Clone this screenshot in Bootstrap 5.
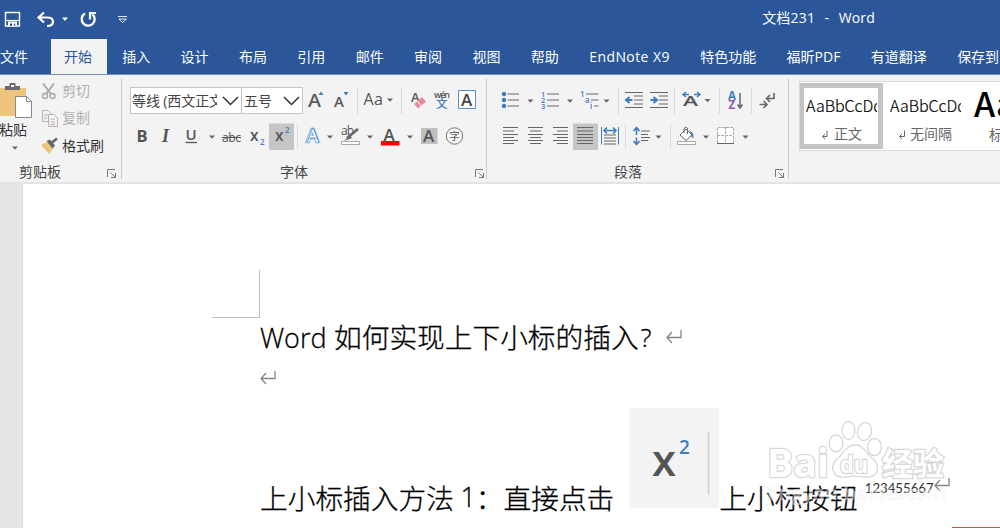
<!DOCTYPE html>
<html lang="zh-CN">
<head>
<meta charset="utf-8">
<meta name="viewport" content="width=device-width, initial-scale=1">
<title>文档231 - Word</title>
<link href="https://cdn.jsdelivr.net/npm/bootstrap@5.3.0/dist/css/bootstrap.min.css" rel="stylesheet">
<style>
body{width:1000px;height:528px;overflow:hidden;background:#fff;font-family:"Open Sans","Noto Sans CJK SC",sans-serif;font-size:14px;line-height:20px;color:#333}
svg{display:block;flex:none;overflow:visible}
svg text{font-family:"Open Sans","Noto Sans CJK SC",sans-serif}
.titlebar{height:39px;background:#2b579a;color:#fff;padding-right:125px}
.titlebar .doc-title{white-space:pre;word-spacing:.9px;letter-spacing:.18px;margin-top:-3px}
.tabs{height:36px;background:#2b579a;border-bottom:1px solid #7390bd;flex-wrap:nowrap;margin-left:-14px;width:1014px;overflow:hidden}
.tabs .nav-link{color:#fff;padding:7px 15.2px 0;height:35px;white-space:nowrap;border:0;line-height:21px;flex:none}
.tabs .nav-link.first{padding-left:14px;width:65px}
.tabs .nav-link.active{background:#f3f3f3;color:#2b579a;padding:7px 0 0 13px;height:36px;width:56px}
.tabs .nav-link.latin-tab{letter-spacing:.42px;width:111px;padding-right:0}
.ribbon{height:109px;background:#f3f3f3;border-bottom:2px solid #e3e3e3}
.group{border-right:1px solid #c8c8c8;height:100px;margin-top:4px}
.g-clip{width:122px}.g-font{width:365px}.g-para{width:302px}
.tool-row{height:28px}
.row-two{margin-top:8px}
.g-font .tools,.g-para .tools{padding-top:8px}
.fbox{height:27px;border:1px solid #c6c6c6;background:#fff;color:#444;line-height:25px;white-space:nowrap}
.fbox .val{overflow:hidden;white-space:nowrap;padding-left:2px}
.fbox .val.wide{letter-spacing:-.1px;padding-left:1px}
.gallery{width:201px;height:70px;margin:6px 0 0 10px;background:#fff;border:1px solid #d8d8d8;border-right:0;overflow:hidden}
.style-card{width:84px;height:66px;margin-top:1px;margin-left:-1px;flex:none;padding:9px 0 0 8px}
.style-card.on{border:5px solid #c4c4c4;padding:4px 0 0 2px}
.style-card .sample{width:71px;overflow:hidden;white-space:nowrap;font:300 16px/27px "Noto Sans CJK SC",sans-serif;color:#000;-webkit-text-stroke:.2px #000}
.style-card .name{color:#666;line-height:30px;white-space:nowrap}
.workspace{height:344px;background:#fff}
.ruler{width:23px;background:#e6e6e6;border-right:1px solid #dcdcdc;flex:none}
.page-area{padding-left:189px;width:977px}
.crop{width:48px;height:48px;margin-top:86px;border:solid #bdbdbd;border-width:0 1px 1px 0}
.para{margin-left:48px;white-space:pre;color:#000;font:300 27.7px/36px "Noto Sans CJK SC",sans-serif;height:40px;-webkit-text-stroke:.3px #000}
.para svg{-webkit-text-stroke:0}
.last-line{height:117px}
.latin{font-family:"Open Sans",sans-serif;font-size:27px;display:inline-block}
.lead-word{padding-top:2px}
.qmark{font-family:"Open Sans",sans-serif;font-size:26px;width:20px;padding:1px 0 0 2px}
.pic{margin:0 0 7px 15px}
.sup-text{font:400 13.2px/20px Lato,sans-serif;margin:0 0 17px 7px;color:#333;-webkit-text-stroke:0}
.watermark{left:760px;top:412px}
.red-edge{left:952px;top:527px;width:48px;height:1px;background:#c0504d}
.g{stroke:#666;fill:none}.b{stroke:#3f7cbf;fill:none}
</style>
</head>
<body class="position-relative">
<svg width="0" height="0" class="position-absolute">
  <defs>
    <path id="caret" d="M-3-1.5H3L0 1.8Z" fill="#666"/>
    <g id="launch" fill="none" stroke="#777"><path d="M.5 8V.5H8M3.5 3.5 8 8M8.500 4V8.500H4"/></g>
    <path id="ret" d="M15 0V7.500H1M6 2 1 7.500 6 13" fill="none" stroke="#858585" stroke-width="1.300"/>
  </defs>
</svg>

<header class="titlebar d-flex justify-content-between align-items-center">
  <svg width="140" height="39" viewBox="0 0 140 39" fill="none" stroke="#fff">
    <path d="M5.500 12.500H19.500V26H5.500Z" stroke-width="1.400"/><path d="M5 20.500H19" stroke-width="1.200"/><path d="M8 21.500H17V26.500H8Z" fill="#fff" stroke="none"/><path d="M10 23.500H12V26H10ZM14 23.500H15.200V26H14Z" fill="#2b579a" stroke="none"/>
    <path d="M39 17.500H47C51 17.500 53 19.500 53 21.800C53 24.500 50.500 26 47 26M44 12.500 38.500 17.500 44 22.500" stroke-width="2.200"/>
    <path d="M62 17.500H68L65 21Z" fill="#fff" stroke="none"/>
    <path d="M85 13.500A6.500 6.500 0 1 0 92.500 14.300" stroke-width="2.300"/><path d="M90 19.500V13H96" stroke-width="2.200"/>
    <path d="M118 16.500H127M119 19 122.500 22.500 126.500 19Z" stroke-width=".9"/>
  </svg>
  <div class="doc-title">文档231  -  Word</div>
</header>
<nav class="nav tabs">
  <a class="nav-link first">文件</a><a class="nav-link active">开始</a><a class="nav-link">插入</a><a class="nav-link">设计</a><a class="nav-link">布局</a><a class="nav-link">引用</a><a class="nav-link">邮件</a><a class="nav-link">审阅</a><a class="nav-link">视图</a><a class="nav-link">帮助</a><a class="nav-link latin-tab">EndNote X9</a><a class="nav-link">特色功能</a><a class="nav-link">福昕PDF</a><a class="nav-link">有道翻译</a><a class="nav-link">保存到</a>
</nav>

<section class="ribbon d-flex">
  <!-- Clipboard -->
  <div class="group g-clip">
    <svg width="121" height="100" viewBox="0 79 121 100">
      <path d="M0 88H26V116H0Z" fill="#eec47a"/><path d="M5 90V86H9.500V83H15.500V86H20V90Z" fill="#6a6a6a"/><path d="M11 85H14V87H11Z" fill="#f3f3f3"/>
      <path d="M15.500 96.500H26.500L31.500 101.500V117.500H15.500Z" fill="#fff" stroke="#888"/><path d="M26.500 96.500V101.500H31.500" fill="none" stroke="#888"/>
      <text x="-1" y="135" font-size="14" fill="#333">粘贴</text><use href="#caret" x="15" y="148"/>
      <g fill="none" stroke="#aaa" stroke-width="2"><path d="M43 83.500 51 94M54 83.500 46 94"/><circle cx="45" cy="96" r="2.500" stroke-width="1.500"/><circle cx="52.500" cy="96" r="2.500" stroke-width="1.500"/></g>
      <g fill="#f3f3f3" stroke="#b9adb9"><path d="M42.500 110.500H48L51.500 114V121.500H42.500Z"/><path d="M48.500 114.500H54L57.500 118V126.500H48.500Z"/><path d="M44 115H48M44 118H47M50.500 119H55M50.500 122H55M50.500 124.500H55"/></g>
      <path d="M41 145 47 142 53 149 49 154Z" fill="#eec47a"/><path d="M46.500 141 50 139.500 55 145.500 52.500 148.500Z" fill="#666"/><path d="M52 142.500 57 138.500" stroke="#666" stroke-width="2.800"/>
      <g font-size="14"><text x="62" y="96" fill="#b1b1b1">剪切</text><text x="62" y="123" fill="#b1b1b1">复制</text><text x="62" y="151" fill="#333">格式刷</text><text x="19" y="177" fill="#444">剪贴板</text></g>
      <use href="#launch" x="107" y="169"/>
    </svg>
  </div>

  <!-- Font -->
  <div class="group g-font">
    <div class="tools">
      <div class="tool-row d-flex ps-2">
        <div class="fbox d-flex" style="width:112px"><div class="val wide" style="width:86px">等线 (西文正文)</div>
          <svg width="24" height="25"><path class="g" d="M6 9 13.500 16.500 21 9" style="stroke:#333" stroke-width="1.500"/></svg></div>
        <div class="fbox d-flex border-start-0" style="width:61px"><div class="val" style="width:37px">五号</div>
          <svg width="23" height="25"><path class="g" d="M5 9 12.500 16.500 20 9" style="stroke:#333" stroke-width="1.500"/></svg></div>
        <svg width="27" height="28" viewBox="303 87 27 28"><text x="308" y="107" font-size="18" font-weight="600" fill="#5a5a5a" textLength="13" lengthAdjust="spacingAndGlyphs">A</text><path d="M318.500 95 321 91.500 323.500 95Z" fill="#3f7cbf"/></svg>
        <svg width="28" height="28" viewBox="330 87 28 28"><text x="334" y="107" font-size="15" font-weight="600" fill="#5a5a5a">A</text><path d="M343.500 92H348.500L346 95.500Z" fill="#3f7cbf"/><path d="M357.500 88V114" stroke="#d9d9d9"/></svg>
        <svg width="45" height="28" viewBox="358 87 45 28"><text x="363.500" y="105" font-size="16" fill="#555" textLength="19.500">Aa</text><use href="#caret" x="390" y="100"/><path d="M401.500 88V114" stroke="#d9d9d9"/></svg>
        <svg width="28" height="28" viewBox="403 87 28 28"><text x="411" y="102" font-size="13" fill="#555" font-weight="600">A</text><path d="M414 104 422 97 426 101.500 418 108.500Z" fill="#e88a9a"/><path d="M417 101 421.500 106" stroke="#f3f3f3"/></svg>
        <svg width="23" height="28" viewBox="431 87 23 28"><text x="434" y="97.500" font-size="9" fill="#555" textLength="16" font-weight="600">wén</text><text x="436" y="108" font-size="11.500" fill="#3f7cbf" font-weight="500">文</text></svg>
        <svg width="28" height="28" viewBox="454 87 28 28"><path d="M458.500 90.500H475.500V108.500H458.500Z" fill="#fff" stroke="#5b8dc8"/><text x="461" y="106" font-size="17" font-weight="600" fill="#444">A</text></svg>
      </div>
      <div class="tool-row row-two d-flex">
        <svg width="32" height="28" viewBox="122 123 32 28"><text x="136.500" y="142" font-size="16.500" font-weight="700" fill="#555">B</text></svg>
        <svg width="24" height="28" viewBox="154 123 24 28"><text x="162" y="142" font-size="18" font-weight="600" font-style="italic" fill="#555" style="font-family:'Liberation Serif',serif">I</text></svg>
        <svg width="41" height="28" viewBox="178 123 41 28"><text x="185.500" y="140" font-size="15" font-weight="600" fill="#555">U</text><path d="M185.500 142.500H197" stroke="#555" stroke-width="1.300"/><use href="#caret" x="212" y="137"/></svg>
        <svg width="27" height="28" viewBox="219 123 27 28"><text x="222" y="142" font-size="12" fill="#555" textLength="19">abc</text><path d="M222 137.500H241" stroke="#555"/></svg>
        <svg width="23" height="28" viewBox="246 123 23 28"><text x="250" y="141" font-size="15.500" font-weight="600" fill="#555">x</text><text x="260" y="145" font-size="8" font-weight="600" fill="#3f7cbf">2</text></svg>
        <svg width="31" height="28" viewBox="269 123 31 28"><path d="M269 123.500H294V150H269Z" fill="#c5c5c5"/><text x="275" y="141" font-size="15.500" font-weight="600" fill="#555">x</text><text x="285" y="133" font-size="8" font-weight="600" fill="#3f7cbf">2</text><path d="M297.500 124V149" stroke="#dcdcdc"/></svg>
        <svg width="37" height="28" viewBox="300 123 37 28"><text x="306.500" y="142" font-size="18" font-weight="600" fill="#fff" stroke="#8fb9e8" stroke-width="2.400" paint-order="stroke">A</text><path d="M307.300 142 312.200 129H313.800L318.700 142M309.500 138H316.500" fill="none" stroke="#3f7cbf" stroke-width=".8"/><use href="#caret" x="330" y="137"/></svg>
        <svg width="40" height="28" viewBox="337 123 40 28"><text x="341" y="135" font-size="12" fill="#555" textLength="13">ab</text><path d="M347 138 358 129" stroke="#666" stroke-width="2.600"/><path d="M344 141 350 135 352 138Z" fill="#666"/><path d="M341.500 141.500H359.500V144.500H341.500Z" fill="#fff" stroke="#aaa"/><use href="#caret" x="370" y="137"/></svg>
        <svg width="39" height="28" viewBox="377 123 39 28"><text x="383.500" y="141" font-size="17" font-weight="600" fill="#555">A</text><path d="M381 141H399.500V145.500H381Z" fill="red"/><use href="#caret" x="410" y="137"/></svg>
        <svg width="26" height="28" viewBox="416 123 26 28"><path d="M421 128H437.500V144H421Z" fill="#bfbfbf"/><text x="423" y="142" font-size="17" font-weight="600" fill="#555">A</text></svg>
        <svg width="28" height="28" viewBox="442 123 28 28"><circle cx="454.500" cy="136" r="8.200" fill="#f8f8f8" stroke="#777"/><text x="449.200" y="140" font-size="10.500" fill="#555">字</text></svg>
      </div>
    </div>
    <svg width="364" height="28" viewBox="122 151 364 28"><text x="280" y="177" font-size="14" fill="#444">字体</text><use href="#launch" x="475" y="169"/></svg>
  </div>

  <!-- Paragraph -->
  <div class="group g-para">
    <div class="tools">
      <div class="tool-row d-flex">
        <svg width="51" height="28" viewBox="487 87 51 28"><g fill="#3f7cbf"><circle cx="504" cy="94" r="2.200"/><circle cx="504" cy="100" r="2.200"/><circle cx="504" cy="106" r="2.200"/></g><path class="g" d="M507.500 94H519M507.500 100H519M507.500 106H519"/><use href="#caret" x="530.500" y="101"/></svg>
        <svg width="39" height="28" viewBox="538 87 39 28"><g font-size="7.500" font-weight="600" fill="#3f7cbf"><text x="541" y="97">1</text><text x="541" y="103">2</text><text x="541" y="109">3</text></g><path class="g" d="M547 94H559M547 100H559M547 106H559"/><use href="#caret" x="570" y="101"/></svg>
        <svg width="44" height="28" viewBox="577 87 44 28"><g font-size="8" font-weight="600" fill="#3f7cbf"><text x="580" y="97">1</text><text x="585" y="103">a</text><text x="590" y="109">i</text></g><path class="g" d="M586 94H598.500M591 100H598.500M594 106H598.500"/><use href="#caret" x="606.500" y="101"/><path d="M618.500 88V114" stroke="#d9d9d9"/></svg>
        <svg width="26" height="28" viewBox="621 87 26 28"><path class="g" d="M625 92.500H643M634 96H643M634 100H643M634 104H643M625 107.500H643"/><path class="b" d="M627 100H632.500M629.500 97 626 100 629.500 103" stroke-width="2"/></svg>
        <svg width="31" height="28" viewBox="647 87 31 28"><path class="g" d="M650 92.500H668M659 96H668M659 100H668M659 104H668M650 107.500H668"/><path class="b" d="M650.500 100H656M653.500 97 657 100 653.500 103" stroke-width="2"/><path d="M674.500 88V114" stroke="#d9d9d9"/></svg>
        <svg width="44" height="28" viewBox="678 87 44 28"><text x="683" y="106" font-size="14" font-weight="600" fill="#555" textLength="15" lengthAdjust="spacingAndGlyphs">A</text><path class="b" d="M683 94.500H689M686 92 683 94.500 686 97M694 94.500H699.500M697 92 700 94.500 697 97" stroke-width="1.500"/><use href="#caret" x="707.500" y="100.500"/><path d="M719.500 88V114" stroke="#d9d9d9"/></svg>
        <svg width="32" height="28" viewBox="722 87 32 28"><text x="728" y="100" font-size="11.500" font-weight="700" fill="#3f7cbf">A</text><text x="728.500" y="109" font-size="11.500" font-weight="700" fill="#8e57b0">Z</text><path class="g" d="M740 93V107M737.500 104.500 740 108 742.500 104.500" stroke-width="1.500"/><path d="M751.500 88V114" stroke="#d9d9d9"/></svg>
        <svg width="30" height="28" viewBox="754 87 30 28"><path class="g" d="M774 93V98.500H767M770 95 766.500 98.500 770 102M759.500 104.500H766.500M763.500 101 767 104.500 763.500 108" stroke-width="1.600"/></svg>
      </div>
      <div class="tool-row row-two d-flex">
        <svg width="36" height="28" viewBox="487 123 36 28"><path class="g" d="M503 127.500H518M503 131H514M503 134.500H518M503 137.500H514M503 140.500H518M503 143.500H514"/></svg>
        <svg width="25" height="28" viewBox="523 123 25 28"><path class="g" d="M528 127.500H543M530 131H541M528 134.500H543M530 137.500H541M528 140.500H543M530 143.500H541"/></svg>
        <svg width="25" height="28" viewBox="548 123 25 28"><path class="g" d="M553 127.500H568M557 131H568M553 134.500H568M557 137.500H568M553 140.500H568M557 143.500H568"/></svg>
        <svg width="26" height="28" viewBox="573 123 26 28"><path d="M573 123.500H598V150H573Z" fill="#c5c5c5"/><path class="g" d="M577 127.500H593M577 131H593M577 134.500H593M577 137.500H593M577 140.500H593M577 143.500H593"/></svg>
        <svg width="30" height="28" viewBox="599 123 30 28"><path class="b" d="M601.500 127V144.500M618.500 127V144.500"/><path class="b" d="M604 130.500H616M607 127.500 604 130.500 607 133.500M613 127.500 616 130.500 613 133.500" stroke-width="1.600"/><path class="g" d="M604 135H616M604 138H616M604 141H616M604 144H616"/><path d="M625.500 124V149" stroke="#dcdcdc"/></svg>
        <svg width="44" height="28" viewBox="629 123 44 28"><path class="b" d="M636.500 128V135M636.500 137.500V144M633.500 131 636.500 127.500 639.500 131M633.500 141 636.500 144.500 639.500 141" stroke-width="1.600"/><path class="g" d="M641 131H650M641 134.500H648M641 137.500H650M641 140.500H648"/><use href="#caret" x="658.500" y="137"/><path d="M670.500 124V149" stroke="#dcdcdc"/></svg>
        <svg width="41" height="28" viewBox="673 123 41 28"><path d="M686 129 692 135 686 140.500 680 135Z" fill="#fff" stroke="#666"/><path class="g" d="M684 133V128.500Q686 126 687.500 128.500V134"/><path d="M689.500 131Q694 132 693.500 138Q691 138 691 134Z" fill="#3f7cbf"/><path d="M677.500 141.500H695.500V144.500H677.500Z" fill="#fff" stroke="#aaa"/><use href="#caret" x="706" y="137"/></svg>
        <svg width="50" height="28" viewBox="714 123 50 28"><path d="M717 128H733.500V143H717Z" fill="#fff"/><path d="M717.500 143V127.500H733.500V143M725.500 127V143M717 135.500H733" fill="none" stroke="#aaa" stroke-dasharray="3 1"/><path class="g" d="M717 143.500H734"/><use href="#caret" x="745.500" y="137"/></svg>
      </div>
    </div>
    <svg width="301" height="28" viewBox="487 151 301 28"><text x="614" y="177" font-size="14" fill="#444">段落</text><use href="#launch" x="775" y="169"/></svg>
  </div>

  <!-- Styles -->
  <div class="gallery d-flex">
    <div class="style-card on"><div class="sample">AaBbCcDd</div><div class="name d-flex"><svg width="20" height="28"><path class="g" d="M21 11.500V17.500H17M19 15 16.500 17.500 19 20"/></svg><span class="ms-1 ps-1">正文</span></div></div>
    <div class="style-card"><div class="sample">AaBbCcDd</div><div class="name d-flex"><svg width="16" height="28"><path class="g" d="M14.500 11.500V17.500H10M12 15 9.500 17.500 12 20"/></svg><span class="ms-1">无间隔</span></div></div>
    <svg width="34" height="68" viewBox="966 82 34 68"><text x="974" y="117" font-size="34" font-weight="500" fill="#000" style="font-family:'Noto Sans CJK SC',sans-serif">Aa</text><text x="989" y="140" font-size="14" fill="#666">标</text></svg>
  </div>
</section>

<main class="workspace d-flex">
  <div class="ruler"></div>
  <div class="page-area">
    <div class="crop"></div>
    <div class="para d-flex"><span class="latin lead-word" style="width:74px">Word </span><span>如何实现上下小标的插入</span><span class="qmark">?</span><svg width="18" height="40" viewBox="0 -12 18 40" style="margin-left:7px"><use href="#ret"/></svg></div>
    <div class="para d-flex"><svg width="18" height="40" viewBox="0 -13 18 40"><use href="#ret"/></svg></div>
    <div class="para last-line d-flex align-items-end"><span>上小标插入方法</span><span class="latin text-end" style="width:22px">1</span><span>：直接点击</span>
      <svg class="pic" width="90" height="100" viewBox="0 0 90 100"><path d="M0 0H90V100H0Z" fill="#f3f3f3"/><text x="23" y="68" font-size="43" font-weight="600" fill="#555" textLength="24" lengthAdjust="spacingAndGlyphs">x</text><text x="50" y="46" font-size="19" font-weight="600" fill="#3f7cbf">2</text><path d="M79.500 24V87" stroke="#d0d0d0" stroke-width="1.500"/></svg><span>上小标按钮</span><span class="sup-text">123455667</span><svg width="18" height="46" viewBox="0 -9 18 46"><use href="#ret"/></svg></div>
  </div>
</main>

<svg class="watermark position-absolute" width="200" height="100" viewBox="760 412 200 100">
  <g fill="#fff" stroke="#d8d8d8" stroke-width="1.300">
    <ellipse cx="848.500" cy="430.500" rx="6.500" ry="9"/><ellipse cx="864.500" cy="431.500" rx="7" ry="9" transform="rotate(12 864.500 431.500)"/><ellipse cx="836" cy="443.500" rx="6.800" ry="8.500"/><ellipse cx="874.500" cy="447" rx="7" ry="8.500"/>
    <path d="M855 445C864 445 866 454 874 460C881 467 877 478 867 477C858 476 852 476 844 477C834 478 829 468 836 460C844 454 846 445 855 445Z"/>
    <g font-weight="700" paint-order="stroke" stroke-width="2.500">
      <text x="767" y="477" font-size="40" textLength="62" lengthAdjust="spacingAndGlyphs">Bai</text>
      <text x="840" y="473" font-size="24" textLength="28" lengthAdjust="spacingAndGlyphs">du</text>
      <text x="882" y="475" font-size="31" textLength="62">经验</text>
    </g>
  </g>
  <text x="767" y="500" font-size="20" font-weight="600" fill="#fff" fill-opacity=".45" stroke="#ddd" stroke-opacity=".45" stroke-width=".6" textLength="179" lengthAdjust="spacingAndGlyphs">jingyan.baidu.com</text>
</svg>
<div class="red-edge position-absolute"></div>
<script src="https://cdn.jsdelivr.net/npm/bootstrap@5.3.0/dist/js/bootstrap.bundle.min.js"></script>
</body>
</html>
